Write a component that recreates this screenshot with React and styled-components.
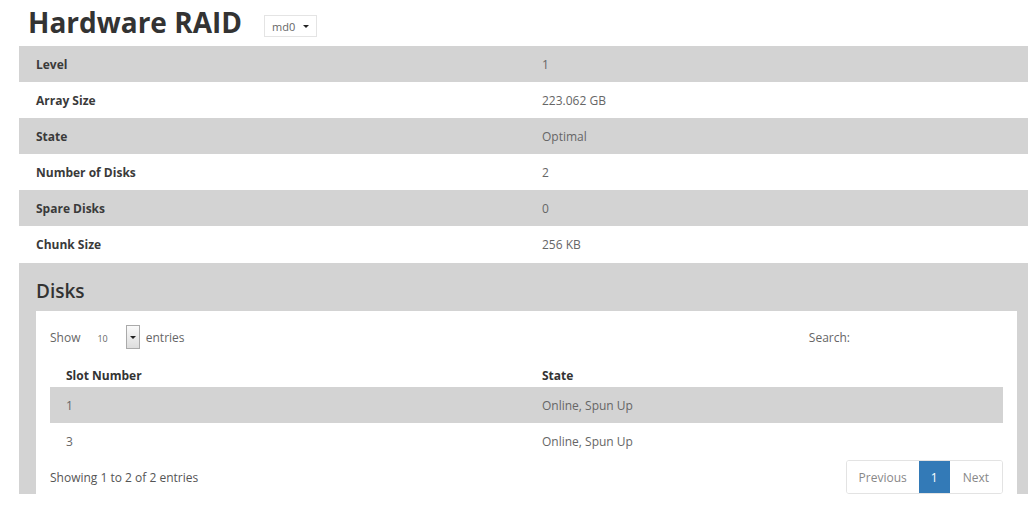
import React from 'react';
import styled, { createGlobalStyle } from 'styled-components';

const grey = '#d3d3d3';
const font = '"Open Sans", "Liberation Sans", sans-serif';

const GlobalStyle = createGlobalStyle`
  body {
    margin: 0;
    background: #fff;
    font-family: ${font};
    color: #555;
  }
`;

const Page = styled.div`
  width: 1009px;
  padding-left: 19px;
`;

const TitleRow = styled.div`
  display: flex;
  align-items: center;
  height: 46px;
  padding-left: 9px;
`;

const Title = styled.h1`
  margin: 0 0 2px;
  font-size: 28px;
  font-weight: 700;
  color: #333;
`;

const Picker = styled.div`
  display: flex;
  align-items: center;
  gap: 8px;
  margin-left: 22px;
  margin-top: 6px;
  height: 20px;
  padding: 0 7px;
  border: 1px solid #e4e4e4;
  font-size: 11px;
  color: #666;
`;

const Caret = styled.span`
  width: 0;
  height: 0;
  border-left: 3px solid transparent;
  border-right: 3px solid transparent;
  border-top: 3px solid #222;
`;

const InfoRow = styled.div`
  display: grid;
  grid-template-columns: 506px 1fr;
  align-items: center;
  height: 36px;
  padding-left: 17px;
  background: ${p => (p.$shaded ? grey : '#fff')};
  font-size: 12px;
`;

const Label = styled.span`
  font-weight: 700;
  color: #3a3a3a;
`;

const Value = styled.span`
  color: #666;
`;

const Panel = styled.section`
  background: ${grey};
  margin-top: 1px;
  padding: 0 11px 0 17px;
  height: 231px;
  display: flex;
  flex-direction: column;
`;

const PanelTitle = styled.h2`
  margin: 0;
  height: 50px;
  padding-top: 8px;
  box-sizing: border-box;
  display: flex;
  align-items: center;
  font-size: 19px;
  font-weight: 600;
  color: #333;
`;

const Box = styled.div`
  flex: 1;
  background: #fff;
  padding: 0 14px;
  display: flex;
  flex-direction: column;
`;

const Controls = styled.div`
  display: flex;
  align-items: center;
  justify-content: space-between;
  height: 52px;
  font-size: 12px;
  color: #666;
`;

const Length = styled.div`
  display: flex;
  align-items: center;
`;

const Small = styled.span`
  font-size: 9px;
  margin: 2px 18px 0 17px;
`;

const DropBtn = styled.span`
  width: 12px;
  height: 22px;
  border: 1px solid #aaa;
  background: linear-gradient(#fafafa, #ddd);
  display: flex;
  align-items: center;
  justify-content: center;
  margin-right: 6px;
`;

const Search = styled.span`
  margin-right: 153px;
`;

const Table = styled.div`
  font-size: 12px;
`;

const Row = styled.div`
  display: grid;
  grid-template-columns: 476px 1fr;
  align-items: center;
  height: ${p => (p.$head ? '24px' : '36px')};
  padding-left: 16px;
  background: ${p => (p.$shaded ? grey : '#fff')};
  font-weight: ${p => (p.$head ? 700 : 400)};
  color: ${p => (p.$head ? '#333' : '#666')};
`;

const Footer = styled.div`
  display: flex;
  align-items: center;
  justify-content: space-between;
  height: 34px;
  margin-top: 1px;
  font-size: 12px;
  color: #555;
`;

const Pager = styled.div`
  display: flex;
  align-self: flex-start;
  border: 1px solid #e3e3e3;
  border-radius: 3px;
  height: 32px;
  overflow: hidden;
`;

const PageBtn = styled.span`
  display: flex;
  align-items: center;
  justify-content: center;
  padding: 0 ${p => p.$pad}px;
  font-size: 12px;
  color: ${p => (p.$active ? '#fff' : '#888')};
  background: ${p => (p.$active ? '#337ab7' : '#fff')};
`;

const info = [
  ['Level', '1'],
  ['Array Size', '223.062 GB'],
  ['State', 'Optimal'],
  ['Number of Disks', '2'],
  ['Spare Disks', '0'],
  ['Chunk Size', '256 KB'],
];

const disks = [
  ['1', 'Online, Spun Up'],
  ['3', 'Online, Spun Up'],
];

export default function App() {
  return (
    <Page>
      <GlobalStyle />
      <TitleRow>
        <Title>Hardware RAID</Title>
        <Picker>
          md0 <Caret />
        </Picker>
      </TitleRow>
      {info.map(([k, v], i) => (
        <InfoRow key={k} $shaded={i % 2 === 0}>
          <Label>{k}</Label>
          <Value>{v}</Value>
        </InfoRow>
      ))}
      <Panel>
        <PanelTitle>Disks</PanelTitle>
        <Box>
          <Controls>
            <Length>
              Show <Small>10</Small>
              <DropBtn>
                <Caret />
              </DropBtn>
              entries
            </Length>
            <Search>Search:</Search>
          </Controls>
          <Table>
            <Row $head>
              <span>Slot Number</span>
              <span>State</span>
            </Row>
            {disks.map(([slot, state], i) => (
              <Row key={slot} $shaded={i % 2 === 0}>
                <span>{slot}</span>
                <span>{state}</span>
              </Row>
            ))}
          </Table>
          <Footer>
            <span>Showing 1 to 2 of 2 entries</span>
            <Pager>
              <PageBtn $pad={12}>Previous</PageBtn>
              <PageBtn $pad={12} $active>1</PageBtn>
              <PageBtn $pad={13}>Next</PageBtn>
            </Pager>
          </Footer>
        </Box>
      </Panel>
    </Page>
  );
}
